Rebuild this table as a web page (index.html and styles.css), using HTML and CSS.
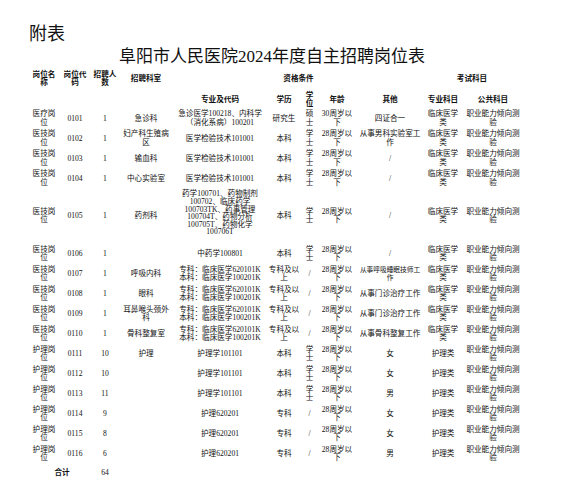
FILE: index.html
```html
<!DOCTYPE html>
<html lang="zh-CN">
<head>
<meta charset="utf-8">
<title>阜阳市人民医院2024年度自主招聘岗位表</title>
<link rel="stylesheet" href="styles.css">
</head>
<body>
<div class="page">
  <h1 class="annex">附表</h1>
  <h2 class="title">阜阳市人民医院2024年度自主招聘岗位表</h2>
  <table class="jobs">
    <colgroup>
      <col class="c1"><col class="c2"><col class="c3"><col class="c4"><col class="c5"><col class="c6"><col class="c7"><col class="c8"><col class="c9"><col class="c10"><col class="c11">
    </colgroup>
    <thead>
      <tr class="head1">
        <th>岗位名称</th><th>岗位代码</th><th>招聘人数</th><th>招聘科室</th><th colspan="5">资格条件</th><th colspan="2">考试科目</th>
      </tr>
      <tr class="head2">
        <th></th><th></th><th></th><th></th><th>专业及代码</th><th>学历</th><th>学位</th><th>年龄</th><th>其他</th><th>专业科目</th><th>公共科目</th>
      </tr>
    </thead>
    <tbody>
      <tr><td>医疗岗位</td><td>0101</td><td>1</td><td>急诊科</td><td>急诊医学100218、内科学（消化系病）100201</td><td>研究生</td><td>硕士</td><td>30周岁以下</td><td>四证合一</td><td>临床医学类</td><td>职业能力倾向测验</td></tr>
      <tr><td>医技岗位</td><td>0102</td><td>1</td><td>妇产科生殖病区</td><td>医学检验技术101001</td><td>本科</td><td>学士</td><td>28周岁以下</td><td>从事男科实验室工作</td><td>临床医学类</td><td>职业能力倾向测验</td></tr>
      <tr><td>医技岗位</td><td>0103</td><td>1</td><td>输血科</td><td>医学检验技术101001</td><td>本科</td><td>学士</td><td>28周岁以下</td><td>/</td><td>临床医学类</td><td>职业能力倾向测验</td></tr>
      <tr><td>医技岗位</td><td>0104</td><td>1</td><td>中心实验室</td><td>医学检验技术101001</td><td>本科</td><td>学士</td><td>28周岁以下</td><td>/</td><td>临床医学类</td><td>职业能力倾向测验</td></tr>
      <tr><td>医技岗位</td><td>0105</td><td>1</td><td>药剂科</td><td class="multi">药学100701、药物制剂100702、临床药学100703TK、药事管理100704T、药物分析100705T、药物化学100706T</td><td>本科</td><td>学士</td><td>28周岁以下</td><td>/</td><td>临床医学类</td><td>职业能力倾向测验</td></tr>
      <tr><td>医技岗位</td><td>0106</td><td>1</td><td></td><td>中药学100801</td><td>本科</td><td>学士</td><td>28周岁以下</td><td>/</td><td>临床医学类</td><td>职业能力倾向测验</td></tr>
      <tr><td>医技岗位</td><td>0107</td><td>1</td><td>呼吸内科</td><td>专科：临床医学620101K<br>本科：临床医学100201K</td><td>专科及以上</td><td>/</td><td>28周岁以下</td><td class="tight">从事呼吸睡眠技师工作</td><td>临床医学类</td><td>职业能力倾向测验</td></tr>
      <tr><td>医技岗位</td><td>0108</td><td>1</td><td>眼科</td><td>专科：临床医学620101K<br>本科：临床医学100201K</td><td>专科及以上</td><td>/</td><td>28周岁以下</td><td>从事门诊治疗工作</td><td>临床医学类</td><td>职业能力倾向测验</td></tr>
      <tr><td>医技岗位</td><td>0109</td><td>1</td><td>耳鼻喉头颈外科</td><td>专科：临床医学620101K<br>本科：临床医学100201K</td><td>专科及以上</td><td>/</td><td>28周岁以下</td><td>从事门诊治疗工作</td><td>临床医学类</td><td>职业能力倾向测验</td></tr>
      <tr><td>医技岗位</td><td>0110</td><td>1</td><td>骨科整复室</td><td>专科：临床医学620101K<br>本科：临床医学100201K</td><td>专科及以上</td><td>/</td><td>28周岁以下</td><td>从事骨科整复工作</td><td>临床医学类</td><td>职业能力倾向测验</td></tr>
      <tr><td>护理岗位</td><td>0111</td><td>10</td><td>护理</td><td>护理学101101</td><td>本科</td><td>学士</td><td>28周岁以下</td><td>女</td><td>护理类</td><td>职业能力倾向测验</td></tr>
      <tr><td>护理岗位</td><td>0112</td><td>10</td><td></td><td>护理学101101</td><td>本科</td><td>学士</td><td>28周岁以下</td><td>女</td><td>护理类</td><td>职业能力倾向测验</td></tr>
      <tr><td>护理岗位</td><td>0113</td><td>11</td><td></td><td>护理学101101</td><td>本科</td><td>学士</td><td>28周岁以下</td><td>男</td><td>护理类</td><td>职业能力倾向测验</td></tr>
      <tr><td>护理岗位</td><td>0114</td><td>9</td><td></td><td>护理620201</td><td>专科</td><td>/</td><td>28周岁以下</td><td>女</td><td>护理类</td><td>职业能力倾向测验</td></tr>
      <tr><td>护理岗位</td><td>0115</td><td>8</td><td></td><td>护理620201</td><td>专科</td><td>/</td><td>28周岁以下</td><td>女</td><td>护理类</td><td>职业能力倾向测验</td></tr>
      <tr><td>护理岗位</td><td>0116</td><td>6</td><td></td><td>护理620201</td><td>专科</td><td>/</td><td>28周岁以下</td><td>男</td><td>护理类</td><td>职业能力倾向测验</td></tr>
      <tr class="total"><td colspan="2" class="total-label">合计</td><td>64</td><td colspan="8"></td></tr>
    </tbody>
  </table>
</div>
</body>
</html>
```
FILE: styles.css
```css
html, body {
  margin: 0;
  background: #ffffff;
}

body {
  color: #111111;
  font-family: "Liberation Serif", "Noto Sans CJK SC", serif;
}

.page {
  padding: 23px 0 0 29px;
}

.annex {
  margin: 0;
  font-family: "Noto Sans CJK SC", sans-serif;
  font-size: 18px;
  line-height: 18px;
  font-weight: normal;
}

.title {
  margin: 7px 0 0 2px;
  width: 482px;
  text-align: center;
  font-size: 17px;
  line-height: 17px;
  font-weight: normal;
}

.jobs {
  margin: 4px 0 0 2px;
  width: 491px;
  table-layout: fixed;
  border-collapse: collapse;
  font-size: 7.6px;
  line-height: 8.4px;
}

.jobs col.c1 { width: 26px; }
.jobs col.c2 { width: 36px; }
.jobs col.c3 { width: 24px; }
.jobs col.c4 { width: 58px; }
.jobs col.c5 { width: 90px; }
.jobs col.c6 { width: 38px; }
.jobs col.c7 { width: 13px; }
.jobs col.c8 { width: 42px; }
.jobs col.c9 { width: 64px; }
.jobs col.c10 { width: 42px; }
.jobs col.c11 { width: 58px; }

.jobs th,
.jobs td {
  padding: 1.6px 0;
  text-align: center;
  vertical-align: middle;
  font-weight: normal;
}

.jobs th {
  font-weight: bold;
}

.jobs .head2 th {
  padding: 3px 0 0;
}

.jobs tr > :nth-child(2) { padding-left: 4px; padding-right: 4px; }
.jobs tr > :nth-child(4) { padding-left: 5px; padding-right: 5px; }
.jobs tr > :nth-child(5) { padding-left: 1.5px; padding-right: 1.5px; }
.jobs tr > :nth-child(6) { padding-left: 3px; padding-right: 3px; }
.jobs tr > :nth-child(7) { padding-left: 1.5px; padding-right: 1.5px; }
.jobs tr > :nth-child(8) { padding-left: 5px; padding-right: 5px; }
.jobs tr > :nth-child(9) { padding-left: 1px; padding-right: 1px; }
.jobs tr > :nth-child(10) { padding-left: 5.5px; padding-right: 5.5px; }
.jobs tr > :nth-child(11) { padding-left: 1px; padding-right: 1px; }

.jobs td.multi {
  line-height: 7.6px;
  padding-bottom: 8px;
}

.jobs td.tight {
  font-size: 6.7px;
}

.jobs .total td {
  height: 16px;
}

.jobs .total-label {
  font-weight: bold;
}
```
